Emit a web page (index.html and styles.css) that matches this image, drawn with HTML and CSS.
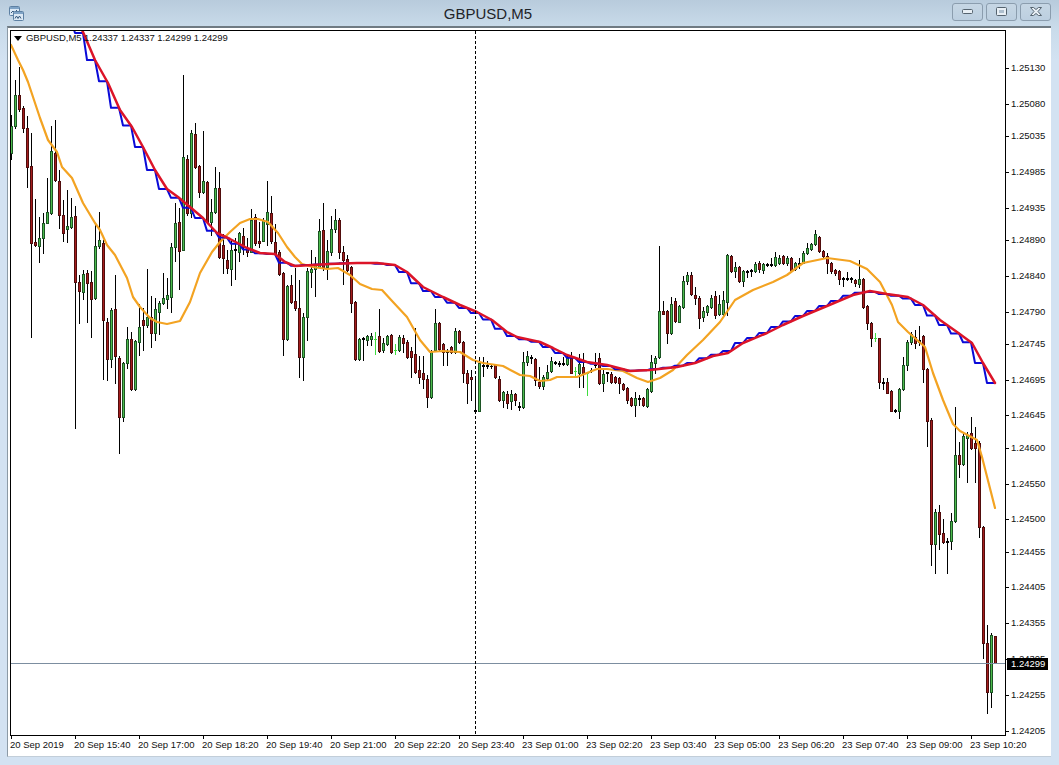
FILE: index.html
```html
<!DOCTYPE html>
<html lang="en">
<head>
<meta charset="utf-8">
<title>GBPUSD,M5</title>
<link rel="stylesheet" href="styles.css">
</head>
<body>
<div class="window">
  <header class="titlebar">
    <svg class="app-icon" viewBox="0 0 15 15" width="15" height="15" aria-hidden="true">
      <rect class="icon-pane" x="0.5" y="0.5" width="10" height="9" rx="1"/>
      <path class="icon-bar" d="M1 1h9v2H1z"/>
      <path class="icon-line" d="M2 7l2-2 1.500 1.500L8 4"/>
      <rect class="icon-pane" x="4.500" y="5.500" width="10" height="9" rx="1"/>
      <path class="icon-bar" d="M5 6h9v2H5z"/>
      <path class="icon-line" d="M6 12.500l1.500-2.500 1.500 2.500 1.500-2.500 1.500 2.500"/>
    </svg>
    <h1 class="title">GBPUSD,M5</h1>
    <div class="controls">
      <button class="ctl" type="button" aria-label="Minimize">
        <svg viewBox="0 0 11 5" width="11" height="5"><rect class="ctl-glyph" x="0.500" y="0.500" width="10" height="4" rx="1"/></svg>
      </button>
      <button class="ctl" type="button" aria-label="Maximize">
        <svg viewBox="0 0 11 9" width="11" height="9"><rect class="ctl-glyph" x="0.500" y="0.500" width="10" height="8" rx="1"/><rect class="ctl-inner" x="3" y="3" width="5" height="3"/></svg>
      </button>
      <button class="ctl" type="button" aria-label="Close">
        <svg viewBox="0 0 12 9" width="12" height="9"><path class="ctl-glyph" d="M0.500 0.500h3l2.500 2 2.500-2h3l-3.500 4 3.500 4h-3l-2.500-2-2.500 2h-3l3.500-4z"/></svg>
      </button>
    </div>
  </header>

  <main class="client">
    <div class="chart-row">
      <div class="plot">
        <svg id="chart" class="chart" viewBox="11 31 994 704" width="994" height="704" aria-hidden="true">
          <g id="candles"></g>
          <path class="ask-line" d="M11 663.500H1005"/>
          <polyline id="ma-slow" class="ma ma-orange"/>
          <polyline id="ma-step" class="ma ma-blue"/>
          <polyline id="ma-fast" class="ma ma-red"/>
          <path class="crosshair" d="M475.500 31V735"/>
        </svg>
        <div class="legend"><span class="legend-arrow"></span><span>GBPUSD,M5 1.24337 1.24337 1.24299 1.24299</span></div>
      </div>
      <div class="price-axis">
        <div class="tick s50">1.25130</div>
        <div class="tick s45">1.25080</div>
        <div class="tick s50">1.25035</div>
        <div class="tick s50">1.24985</div>
        <div class="tick s45">1.24935</div>
        <div class="tick s50">1.24890</div>
        <div class="tick s50">1.24840</div>
        <div class="tick s45">1.24790</div>
        <div class="tick s50">1.24745</div>
        <div class="tick s50">1.24695</div>
        <div class="tick s45">1.24645</div>
        <div class="tick s50">1.24600</div>
        <div class="tick s50">1.24550</div>
        <div class="tick s45">1.24500</div>
        <div class="tick s50">1.24455</div>
        <div class="tick s50">1.24405</div>
        <div class="tick s50">1.24355</div>
        <div class="tick s50">1.24305</div>
        <div class="tick s50">1.24255</div>
        <div class="tick s50">1.24205</div>
        <div class="price-now">1.24299</div>
      </div>
    </div>
    <div class="time-axis">
      <div class="time">20 Sep 2019</div>
      <div class="time">20 Sep 15:40</div>
      <div class="time">20 Sep 17:00</div>
      <div class="time">20 Sep 18:20</div>
      <div class="time">20 Sep 19:40</div>
      <div class="time">20 Sep 21:00</div>
      <div class="time">20 Sep 22:20</div>
      <div class="time">20 Sep 23:40</div>
      <div class="time">23 Sep 01:00</div>
      <div class="time">23 Sep 02:20</div>
      <div class="time">23 Sep 03:40</div>
      <div class="time">23 Sep 05:00</div>
      <div class="time">23 Sep 06:20</div>
      <div class="time">23 Sep 07:40</div>
      <div class="time">23 Sep 09:00</div>
      <div class="time">23 Sep 10:20</div>
    </div>
  </main>
</div>
<script src="chart.js"></script>
</body>
</html>
```
FILE: styles.css
```css
* { box-sizing: border-box; }
html, body { margin: 0; padding: 0; height: 100%; overflow: hidden; }
body {
  width: 1059px;
  height: 765px;
  font-family: "Liberation Sans", Arial, sans-serif;
  background: #d5e4f3;
}
.window {
  display: flex;
  flex-direction: column;
  height: 765px;
  background: linear-gradient(180deg, #b8cbdc 0, #c9dbea 27px, #d3e2f2 60px);
}

/* title bar */
.titlebar {
  display: flex;
  align-items: center;
  height: 26px;
  padding: 0 8px 0 9px;
}
.app-icon { flex: none; margin-top: 1px; }
.icon-pane { fill: #dce9f5; stroke: #5d80a3; stroke-width: 1; }
.icon-bar { fill: #7fa3c6; }
.icon-line { fill: none; stroke: #34587c; stroke-width: 1; }
.title {
  flex: 1;
  margin: 0;
  font-size: 15px;
  font-weight: 400;
  line-height: 27px;
  text-align: center;
  color: #1f2429;
}
.controls { display: flex; gap: 3px; margin-bottom: 3px; }
.ctl {
  display: flex;
  align-items: center;
  justify-content: center;
  width: 31px;
  height: 18px;
  padding: 0;
  border: 1px solid #8b9dae;
  border-radius: 3px;
  background: linear-gradient(180deg, #c6d6e4, #bccfe0);
}
.ctl svg { display: block; }
.ctl-glyph { fill: #e8eff5; stroke: #55636f; stroke-width: 1; }
.ctl-inner { fill: #aebfce; }

/* client area */
.client {
  width: 1044px;
  margin-left: 7px;
  padding: 2px 0 5px 2px;
  background: #fff;
  border-left: 1px solid #8c9aa6;
  border-top: 2px solid #6f7a82;
  border-bottom: 1px solid #c2ced9;
  color: #111;
  font-size: 9.500px;
}
.chart-row { display: flex; }
.plot {
  position: relative;
  flex: none;
  width: 996px;
  height: 706px;
  border: 1px solid #000;
}
.chart { display: block; }

/* chart drawing */
.wick { fill: none; stroke: #000; stroke-width: 1; shape-rendering: crispEdges; }
.wick-lime { fill: none; stroke: #3fdc3f; stroke-width: 1; shape-rendering: crispEdges; }
.edge-doji { fill: #000; shape-rendering: crispEdges; }
.edge-up { fill: #1c5424; shape-rendering: crispEdges; }
.edge-down { fill: #500c0c; shape-rendering: crispEdges; }
.body-up { fill: #4cbb4c; shape-rendering: crispEdges; }
.body-down { fill: #a41c1c; shape-rendering: crispEdges; }
.ask-line { stroke: #7c8ea0; stroke-width: 1; fill: none; shape-rendering: crispEdges; }
.crosshair { stroke: #000; stroke-width: 1; stroke-dasharray: 3 2; fill: none; shape-rendering: crispEdges; }
.ma { fill: none; stroke-linejoin: round; stroke-linecap: round; }
.ma-orange { stroke: #f3a322; stroke-width: 2.200; }
.ma-blue { stroke: #0a0ad8; stroke-width: 2; }
.ma-red { stroke: #dc1428; stroke-width: 2.500; }

/* legend over the plot */
.legend {
  position: absolute;
  left: 3px;
  top: 1px;
  display: flex;
  align-items: center;
  gap: 4px;
  height: 12px;
  font-size: 9.500px;
  letter-spacing: -0.050px;
  line-height: 12px;
  white-space: nowrap;
  color: #111;
}
.legend-arrow {
  width: 0;
  height: 0;
  border-left: 4px solid transparent;
  border-right: 4px solid transparent;
  border-top: 5px solid #000;
}

/* price scale */
.price-axis {
  position: relative;
  flex: 1;
  height: 706px;
  padding-top: 32px;
  line-height: 12px;
}
.tick { display: flex; align-items: flex-start; }
.tick::before {
  content: "";
  flex: none;
  width: 3px;
  height: 1px;
  margin: 6px 2px 0 0;
  background: #000;
}
.s50 { height: 35.800px; }
.s45 { height: 32.300px; }
.price-now {
  position: absolute;
  left: 1px;
  top: 628px;
  width: 41px;
  height: 12px;
  padding-left: 4px;
  background: #000;
  color: #fff;
}

/* time scale */
.time-axis {
  display: flex;
  height: 15px;
  line-height: 12px;
  white-space: nowrap;
}
.time { flex: none; width: 64px; }
.time::before {
  content: "";
  display: block;
  width: 1px;
  height: 3px;
  margin-left: 1px;
  background: #000;
}
```
FILE: chart.js
```js
// Candles, one per bar, in chart pixels: [body top, body bottom, high, low, kind]
// kind: g = up, r = down, d = doji, l = doji drawn in lime
var candles = [
[126,153,115,159,'g'],[95,126,80,128,'g'],[95,109,67,111,'r'],[108,128,106,132,'r'],[128,167,116,187,'r'],
[166,243,133,337,'r'],[242,245,199,246,'r'],[238,246,217,262,'g'],[223,238,213,253,'g'],[212,223,178,223,'g'],
[151,213,126,214,'g'],[153,180,120,181,'r'],[181,215,170,228,'r'],[215,233,200,241,'r'],[226,229,190,242,'g'],
[217,227,198,228,'g'],[216,282,206,428,'r'],[282,291,275,323,'r'],[274,292,270,299,'g'],[273,283,270,322,'r'],
[282,299,271,337,'r'],[246,298,225,299,'g'],[240,246,212,248,'g'],[243,320,240,379,'r'],[322,359,318,380,'r'],
[310,359,308,367,'g'],[309,356,275,383,'r'],[358,417,356,453,'r'],[363,417,362,421,'g'],[339,363,327,368,'g'],
[339,389,332,390,'r'],[341,389,340,390,'g'],[327,342,304,355,'g'],[320,325,308,350,'r'],[317,325,269,327,'g'],
[317,333,296,347,'r'],[309,333,298,340,'g'],[303,312,301,334,'g'],[298,303,273,304,'g'],[295,299,278,308,'g'],
[247,297,243,312,'g'],[223,247,203,261,'g'],[222,251,208,289,'r'],[157,250,75,250,'g'],[159,213,155,215,'r'],
[133,213,130,217,'g'],[134,167,123,168,'r'],[166,192,165,197,'r'],[181,192,131,193,'g'],[182,222,181,223,'r'],
[212,222,199,235,'g'],[188,212,167,213,'g'],[188,257,172,258,'r'],[245,258,234,273,'r'],[260,268,250,273,'r'],
[250,269,240,285,'g'],[249,250,238,279,'d'],[233,252,232,261,'g'],[236,247,228,254,'r'],[248,252,238,256,'r'],
[220,252,209,252,'g'],[217,243,214,245,'r'],[241,243,222,247,'r'],[220,241,218,241,'g'],[212,224,181,245,'g'],
[213,241,196,243,'r'],[242,253,224,254,'r'],[252,274,250,275,'r'],[273,339,272,355,'r'],[286,339,285,340,'g'],
[285,302,275,303,'r'],[301,308,268,310,'r'],[308,357,280,377,'r'],[317,357,313,380,'g'],[271,317,268,340,'g'],
[269,272,250,287,'g'],[265,269,257,296,'g'],[231,267,219,267,'g'],[230,267,203,270,'r'],[251,267,240,279,'g'],
[229,252,216,255,'g'],[220,229,209,232,'g'],[220,252,218,258,'r'],[252,260,246,284,'r'],[259,270,255,271,'r'],
[267,303,266,312,'r'],[302,359,301,360,'r'],[339,359,338,360,'g'],[338,339,337,360,'d'],[336,340,335,345,'g'],
[336,339,333,345,'g'],[339,339,332,354,'l'],[336,351,309,352,'r'],[343,350,338,352,'g'],[336,344,335,345,'g'],
[335,352,334,353,'r'],[350,350,344,354,'l'],[337,350,335,351,'g'],[338,343,335,352,'r'],[342,357,340,358,'r'],
[351,357,347,377,'r'],[354,372,328,373,'r'],[370,377,356,383,'r'],[373,379,356,388,'r'],[379,397,375,407,'r'],
[352,397,350,398,'g'],[323,350,309,351,'g'],[323,349,322,350,'r'],[344,352,343,365,'r'],[351,352,349,365,'d'],
[347,352,346,353,'r'],[331,352,328,353,'g'],[331,342,330,343,'r'],[342,373,341,382,'r'],[373,383,370,403,'r'],
[377,379,370,400,'r'],[410,411,377,413,'d'],[363,411,357,411,'g'],[365,366,357,376,'d'],[365,366,361,368,'d'],
[366,366,365,368,'d'],[365,377,364,378,'r'],[379,400,376,401,'r'],[392,400,391,407,'g'],[394,403,391,408,'r'],
[394,401,390,409,'g'],[394,400,393,405,'r'],[406,407,402,410,'d'],[362,407,352,408,'g'],[356,362,351,365,'g'],
[357,358,355,363,'d'],[359,380,358,385,'r'],[382,386,367,388,'r'],[377,386,375,389,'g'],[372,378,365,379,'g'],
[361,371,357,372,'g'],[362,363,361,364,'d'],[363,364,361,366,'d'],[363,364,357,365,'d'],[358,364,354,365,'g'],
[358,373,352,373,'r'],[371,371,367,375,'l'],[364,373,354,387,'g'],[367,373,353,387,'r'],[373,373,373,395,'l'],
[370,370,368,372,'d'],[365,365,353,367,'d'],[358,383,353,384,'r'],[374,383,370,391,'g'],[372,373,372,381,'d'],
[374,382,372,383,'r'],[377,382,376,383,'r'],[378,383,377,393,'r'],[384,389,383,390,'r'],[388,400,387,403,'r'],
[398,405,397,406,'r'],[398,405,392,416,'g'],[398,399,395,405,'d'],[398,405,397,406,'r'],[389,406,388,407,'g'],
[362,391,355,392,'g'],[358,363,356,373,'g'],[311,357,246,358,'g'],[311,314,301,314,'r'],[311,333,310,343,'r'],
[304,333,297,334,'g'],[301,321,298,322,'r'],[306,322,305,322,'g'],[281,307,276,308,'g'],[275,281,272,284,'g'],
[275,294,272,295,'r'],[295,298,287,304,'r'],[298,318,296,328,'r'],[311,317,307,321,'g'],[306,312,305,315,'g'],
[298,307,295,308,'g'],[296,315,291,318,'r'],[304,314,295,315,'g'],[300,314,291,315,'g'],[255,302,254,315,'g'],
[256,271,255,272,'r'],[267,271,262,277,'g'],[267,281,266,282,'r'],[271,281,270,286,'g'],[271,272,270,277,'d'],
[270,271,269,276,'d'],[264,271,262,272,'g'],[263,269,261,272,'r'],[264,270,263,273,'g'],[264,265,263,266,'d'],
[264,265,258,266,'d'],[257,265,252,266,'g'],[258,263,255,264,'g'],[256,263,255,264,'r'],[258,263,256,265,'g'],
[258,270,257,271,'r'],[263,269,262,270,'g'],[263,264,258,268,'d'],[253,263,251,263,'g'],[248,253,243,254,'g'],
[244,249,243,250,'g'],[234,244,230,245,'g'],[237,251,236,252,'r'],[251,256,250,257,'r'],[256,263,253,273,'r'],
[263,271,262,273,'r'],[270,273,269,275,'r'],[271,279,270,284,'r'],[278,279,277,286,'d'],[278,279,272,280,'d'],
[278,279,277,282,'d'],[280,283,279,286,'r'],[279,284,260,287,'g'],[279,307,278,308,'r'],[306,323,305,329,'r'],
[323,338,322,346,'r'],[338,338,333,341,'l'],[338,382,338,388,'r'],[382,383,378,389,'d'],[382,393,378,393,'r'],
[391,411,390,411,'r'],[410,411,409,412,'d'],[389,411,388,418,'g'],[365,389,357,390,'g'],[342,365,340,370,'g'],
[334,342,332,344,'g'],[337,343,330,348,'r'],[340,342,326,345,'d'],[336,369,335,382,'r'],[369,421,368,446,'r'],
[420,544,418,565,'r'],[512,544,509,573,'g'],[512,534,505,549,'r'],[533,542,519,543,'r'],[541,542,538,573,'d'],
[521,541,513,549,'g'],[455,521,407,522,'g'],[455,464,442,477,'r'],[436,464,432,465,'g'],[435,438,432,482,'g'],
[433,448,417,449,'r'],[443,448,427,482,'r'],[443,527,441,537,'r'],[527,643,526,658,'r'],[643,692,625,713,'r'],
[635,692,633,707,'g'],[636,663,636,663,'r']
];

var slowMA = [11,45,18,60,23,70,28,82,33,97,40,118,48,140,57,152,62,167,72,178,83,203,95,223,100,230,107,245,115,255,127,278,133,297,140,307,150,318,157,322,167,324,180,321,190,302,200,273,212,252,220,242,230,232,240,223,250,219,258,219,268,222,278,233,287,247,295,257,302,264,313,267,327,269,338,268,350,275,360,284,372,289,382,290,393,302,407,317,420,340,430,352,443,351,460,352,473,360,483,363,503,366,520,375,530,376,540,381,550,380,557,377,577,377,587,373,597,369,607,369,623,371,637,378,648,382,660,378,673,370,687,355,703,340,720,322,735,300,753,290,773,282,787,275,803,263,827,258,850,261,867,269,880,282,892,305,898,322,908,332,925,347,933,373,943,400,953,424,960,431,977,440,982,457,995,508];

var fastMA = [78,22,83,32,95,60,108,83,120,110,132,127,143,147,155,170,167,189,178,197,190,207,203,218,217,233,230,239,247,248,260,253,275,254,285,262,295,266,330,264,357,263,377,263,395,265,407,272,423,287,443,297,460,305,477,312,492,320,507,332,517,337,540,342,553,348,567,355,587,362,607,365,630,371,650,370,677,367,695,363,713,356,728,353,743,343,767,333,783,325,803,316,827,306,853,295,870,291,887,294,908,297,923,305,940,320,957,332,972,343,983,363,995,383];

function fastAt(x) {
  for (var i = 0; i + 3 < fastMA.length; i += 2) {
    if (x <= fastMA[i + 2]) {
      var t = (x - fastMA[i]) / (fastMA[i + 2] - fastMA[i]);
      return fastMA[i + 1] + t * (fastMA[i + 3] - fastMA[i + 1]);
    }
  }
  return fastMA[fastMA.length - 1];
}

function pairs(list) {
  var out = [];
  for (var i = 0; i < list.length; i += 2) out.push(list[i] + ',' + list[i + 1]);
  return out.join(' ');
}

// The stepped average holds each value for three bars, moving during the first.
function stepped() {
  var pts = [71, 20, 75, 33];
  var y = 33;
  for (var x = 83; x < 995; x += 12) {
    pts.push(x, y);
    y = fastAt(x + 12);
    pts.push(x + 4, y);
  }
  pts.push(995, y);
  return pts;
}

var NS = 'http://www.w3.org/2000/svg';
function addPath(cls, d) {
  var p = document.createElementNS(NS, 'path');
  p.setAttribute('class', cls);
  p.setAttribute('d', d);
  document.getElementById('candles').appendChild(p);
}

var wicks = '', lime = '', edgeUp = '', edgeDown = '', edgeDoji = '', up = '', down = '';
candles.forEach(function (c, k) {
  var cx = 11 + 4 * k, top = c[0], bot = c[1], hi = c[2], lo = c[3], kind = c[4];
  if (kind === 'l') {
    lime += 'M' + (cx + 0.5) + ' ' + hi + 'V' + (lo + 1) + 'M' + (cx - 1) + ' ' + (top + 0.5) + 'h3';
    return;
  }
  wicks += 'M' + (cx + 0.5) + ' ' + hi + 'V' + (lo + 1);
  var box = 'M' + (cx - 1) + ' ' + top + 'h3V' + (bot + 1) + 'h-3z';
  var inner = 'M' + cx + ' ' + (top + 1) + 'h1V' + bot + 'h-1z';
  if (kind === 'd' || bot - top < 2) {
    edgeDoji += box;
  } else if (kind === 'g') {
    edgeUp += box;
    up += inner;
  } else {
    edgeDown += box;
    down += inner;
  }
});
addPath('wick', wicks);
addPath('edge-doji', edgeDoji);
addPath('edge-up', edgeUp);
addPath('edge-down', edgeDown);
addPath('body-up', up);
addPath('body-down', down);
addPath('wick-lime', lime);

document.getElementById('ma-slow').setAttribute('points', pairs(slowMA));
document.getElementById('ma-step').setAttribute('points', pairs(stepped()));
document.getElementById('ma-fast').setAttribute('points', pairs(fastMA));
```
